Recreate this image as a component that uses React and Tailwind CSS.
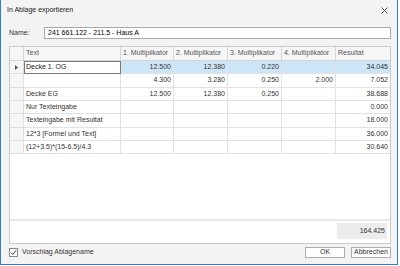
import React from 'react';

const cols = 'grid grid-cols-[14px_97px_53px_54px_54px_54px_54px]';

const rows = [
  { text: 'Decke 1. OG', m1: '12.500', m2: '12.380', m3: '0.220', m4: '', r: '34.045', sel: true, h: 'h-[13px]' },
  { text: '', m1: '4.300', m2: '3.280', m3: '0.250', m4: '2.000', r: '7.052', h: 'h-[14px]' },
  { text: 'Decke EG', m1: '12.500', m2: '12.380', m3: '0.250', m4: '', r: '38.688', h: 'h-[13px]' },
  { text: 'Nur Texteingabe', m1: '', m2: '', m3: '', m4: '', r: '0.000', h: 'h-[13px]' },
  { text: 'Texteingabe mit Resultat', m1: '', m2: '', m3: '', m4: '', r: '18.000', h: 'h-[14px]' },
  { text: '12*3 [Formel und Text]', m1: '', m2: '', m3: '', m4: '', r: '36.000', h: 'h-[13px]' },
  { text: '(12+3.5)*(15-6.5)/4.3', m1: '', m2: '', m3: '', m4: '', r: '30.640', h: 'h-[13px]' },
];

const headers = ['Text', '1. Multiplikator', '2. Multiplikator', '3. Multiplikator', '4. Multiplikator', 'Resultat'];

const NumCell = ({ value, sel, last }) => (
  <div
    className={`flex items-center justify-end pr-[2px] border-b border-[#e2e2e2] ${last ? '' : 'border-r'} ${
      sel ? 'bg-[#cde6f7]' : 'bg-white'
    }`}
  >
    {value}
  </div>
);

const App = () => {
  return (
    <div className="w-[400px] h-[266px] bg-white">
      <div className="w-[398px] h-[265px] flex flex-col bg-[#f3f3f3] border-l border-r border-b border-[#2f7fd6] font-['Liberation_Sans',Arial,sans-serif] text-[7px] text-[#333]">
        {/* title bar */}
        <div className="h-[21px] flex items-center justify-between pl-[6px] pr-[9px]">
          <span className="text-[#222]">In Ablage exportieren</span>
          <svg width="7" height="7" viewBox="0 0 7 7" className="mt-[-1px]">
            <path d="M0.5 0.5 L6.5 6.5 M6.5 0.5 L0.5 6.5" stroke="#444" strokeWidth="0.9" />
          </svg>
        </div>

        {/* name */}
        <div className="flex items-center mt-[6px] pl-[8px] pr-[6px]">
          <span className="w-[35px]">Name:</span>
          <div className="flex-1 h-[12px] bg-white border border-[#a9a9a9] flex items-center pl-[3px] text-black">
            241 661.122 - 211.5 - Haus A
          </div>
        </div>

        {/* grid */}
        <div className="mt-[7px] ml-[8px] w-[382px] h-[198px] border border-[#c9c9c9] bg-white flex flex-col">
          <div className={`${cols} h-[14px] bg-[#f6f6f6] border-b border-[#d6d6d6] text-[#555]`}>
            <div className="border-r border-[#d6d6d6]" />
            {headers.map((h, i) => (
              <div
                key={h}
                className={`flex items-center pl-[2px] ${i < headers.length - 1 ? 'border-r border-[#d6d6d6]' : ''}`}
              >
                {h}
              </div>
            ))}
          </div>

          {rows.map((r, i) => (
            <div key={i} className={`${cols} ${r.h}`}>
              <div className="bg-[#f6f6f6] border-r border-b border-[#dedede] flex items-center justify-center">
                {r.sel && (
                  <svg width="3" height="5" viewBox="0 0 3 5">
                    <path d="M0 0 L3 2.5 L0 5 Z" fill="#555" />
                  </svg>
                )}
              </div>
              {r.sel ? (
                <div className="flex items-center pl-[1px] bg-white border border-[#7a7a7a] text-[#222]">{r.text}</div>
              ) : (
                <div className="flex items-center pl-[2px] bg-white border-r border-b border-[#e2e2e2]">{r.text}</div>
              )}
              <NumCell value={r.m1} sel={r.sel} />
              <NumCell value={r.m2} sel={r.sel} />
              <NumCell value={r.m3} sel={r.sel} />
              <NumCell value={r.m4} sel={r.sel} />
              <NumCell value={r.r} sel={r.sel} last />
            </div>
          ))}

          <div className="flex-1" />

          <div className={`${cols} h-[24px] border-t-2 border-[#e8e8e8]`}>
            <div className="col-span-6" />
            <div className="pl-[1px] pr-[3px] pt-[2px] pb-[4px]">
              <div className="h-full bg-[#ececec] flex items-center justify-end pr-[2px]">164.425</div>
            </div>
          </div>
        </div>

        {/* bottom */}
        <div className="flex items-center mt-[3px] pl-[8px] pr-[6px] h-[11px]">
          <div className="w-[9px] h-[9px] border border-[#8a8a8a] bg-white flex items-center justify-center">
            <svg width="7" height="7" viewBox="0 0 7 7">
              <path d="M1 3.6 L2.8 5.4 L6 1.4" stroke="#333" strokeWidth="1" fill="none" />
            </svg>
          </div>
          <span className="ml-[4px]">Vorschlag Ablagename</span>
          <div className="flex-1" />
          <button className="w-[40px] h-[11px] bg-[#fdfdfd] border border-[#adadad] flex items-center justify-center text-[#333]">
            OK
          </button>
          <button className="ml-[6px] w-[40px] h-[11px] bg-[#fdfdfd] border border-[#adadad] flex items-center justify-center text-[#333]">
            Abbrechen
          </button>
        </div>
      </div>
    </div>
  );
};

export default App;
